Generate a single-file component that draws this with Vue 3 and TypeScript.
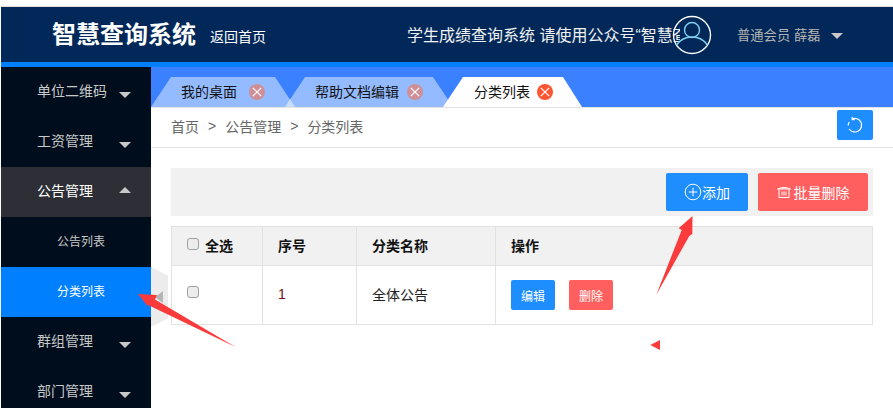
<script setup lang="ts">
interface MenuItem { label: string; state: 'closed' | 'open' | 'sub' | 'current' }
const menu: MenuItem[] = [
  { label: '单位二维码', state: 'closed' },
  { label: '工资管理', state: 'closed' },
  { label: '公告管理', state: 'open' },
  { label: '公告列表', state: 'sub' },
  { label: '分类列表', state: 'current' },
  { label: '群组管理', state: 'closed' },
  { label: '部门管理', state: 'closed' },
]
const tabs = [
  { label: '我的桌面', cls: 'tab-a' },
  { label: '帮助文档编辑', cls: 'tab-b' },
  { label: '分类列表', cls: 'tab-c' },
]
</script>

<template>
  <div class="page">
    <header class="header">
      <div class="title">智慧查询系统</div>
      <a class="home">返回首页</a>
      <div class="notice"><span>学生成绩查询系统 请使用公众号“智慧查询系统”</span></div>
      <svg class="avatar" width="40" height="40" viewBox="0 0 40 40">
        <circle cx="20" cy="20" r="18.5" fill="none" stroke="#fff" stroke-width="1.4" />
        <circle cx="20" cy="15" r="7.5" fill="none" stroke="#7fd0f2" stroke-width="1.4" />
        <path d="M4.5 30 C9 23.5 14 22 20 22 C26 22 31 23.5 35.5 30" fill="none" stroke="#7fd0f2" stroke-width="1.4" />
      </svg>
      <div class="user">普通会员 薛磊</div>
      <i class="tri down user-tri"></i>
    </header>
    <div class="accent"></div>
    <div class="body">
      <aside class="side">
        <div
          v-for="m in menu"
          :key="m.label"
          class="menu-item"
          :class="m.state"
        >
          <span class="menu-label">{{ m.label }}</span>
          <i v-if="m.state === 'closed'" class="tri down"></i>
          <i v-if="m.state === 'open'" class="tri up"></i>
        </div>
      </aside>
      <main class="main">
        <div class="tabbar">
          <div v-for="t in tabs" :key="t.label" class="tab" :class="t.cls">
            <span class="tab-label">{{ t.label }}</span>
            <svg class="close" width="16" height="16" viewBox="0 0 16 16">
              <circle cx="8" cy="8" r="8" class="close-bg" />
              <path d="M3.8 3.8 L12.2 12.2 M12.2 3.8 L3.8 12.2" stroke="#fff" stroke-width="1.2" />
            </svg>
          </div>
          <div class="notch"></div>
        </div>
        <div class="crumbbar">
          <div class="crumbs">
            <span>首页</span><em>&gt;</em><span>公告管理</span><em>&gt;</em><span>分类列表</span>
          </div>
          <button class="refresh" type="button" aria-label="刷新">
            <svg width="18" height="18" viewBox="0 0 18 18" fill="none" stroke="#fff" stroke-width="1.2">
              <path d="M6 3 A6.8 6.8 0 1 1 3.2 13" />
              <path d="M2.2 9.5 A7 7 0 0 1 3.2 6" />
              <path d="M6.2 1 L6.2 3.6 L8.8 3.6" />
            </svg>
          </button>
        </div>
        <div class="content">
          <div class="toolbar">
            <button class="btn blue add" type="button">
              <svg width="18" height="18" viewBox="0 0 18 18" fill="none" stroke="#fff" stroke-width="1">
                <circle cx="9" cy="9" r="7.8" />
                <path d="M9 4.8 V13.2 M4.8 9 H13.2" />
              </svg>
              <span>添加</span>
            </button>
            <button class="btn red del" type="button">
              <svg width="14" height="14" viewBox="0 0 14 14" fill="none" stroke="#fff" stroke-width="1">
                <path d="M0.5 4 C3 2.4 11 2.4 13.5 4 Z M2 4.5 V12.5 H12 V4.5 M5 6.5 V10.5 M7 6.5 V10.5 M9 6.5 V10.5 M4.5 2.5 H9.5" />
              </svg>
              <span>批量删除</span>
            </button>
          </div>
          <table class="grid">
            <colgroup>
              <col class="col-a" />
              <col class="col-b" />
              <col class="col-c" />
              <col />
            </colgroup>
            <thead>
              <tr>
                <th><span class="check head-check"></span>全选</th>
                <th>序号</th>
                <th>分类名称</th>
                <th>操作</th>
              </tr>
            </thead>
            <tbody>
              <tr>
                <td><span class="check"></span></td>
                <td class="num">1</td>
                <td>全体公告</td>
                <td>
                  <div class="row-actions">
                    <button class="mini blue" type="button">编辑</button>
                    <button class="mini red" type="button">删除</button>
                  </div>
                </td>
              </tr>
            </tbody>
          </table>
          <div class="handle"><i></i></div>
        </div>
      </main>
    </div>
    <svg class="marks" width="893" height="408" viewBox="0 0 893 408">
      <g fill="#fb3b3b">
        <path d="M138 294 L157 295 L155 299.5 L235.5 347 L147 304.5 L149 308 Z" />
        <path d="M692.5 216 L678.7 228.3 L681.7 230 L656.3 294.7 L689.3 236 L692.3 234 Z" />
        <path d="M650.3 345 L660 340 L660 350 Z" />
      </g>
    </svg>
  </div>
</template>

<style>
html, body { margin: 0; background: #fff; overflow: hidden; }
</style>

<style scoped>
.page {
  width: 893px;
  height: 408px;
  padding: 6px 0 0 1px;
  box-sizing: border-box;
  overflow: hidden;
  font-family: "Liberation Sans", "Noto Sans CJK SC", sans-serif;
  font-size: 14px;
  color: #333;
  display: flex;
  flex-direction: column;
  position: relative;
}
.header {
  height: 56px;
  box-sizing: border-box;
  border-top: 1px solid #dcdcdc;
  flex: none;
  background: #022859;
  color: #fff;
  display: flex;
  align-items: center;
  position: relative;
}
.title { margin-left: 51px; font-size: 24px; font-weight: 700; line-height: 32px; margin-top: 1px; }
.home { margin-left: 14px; font-size: 14px; margin-top: 2px; }
.notice {
  margin-left: 141px;
  width: 273px;
  overflow: hidden;
  white-space: nowrap;
  font-size: 16px;
  color: #f2f2f2;
  margin-top: -1px;
}
.avatar { margin-left: -8px; flex: none; position: relative; margin-top: 1px; }
.user { margin-left: 25px; font-size: 13.3px; color: #b4b4b4; white-space: nowrap; margin-top: -1px; }
.tri { display: block; width: 0; height: 0; border-left: 6px solid transparent; border-right: 6px solid transparent; }
.tri.down { border-top: 6px solid #c8c8c8; }
.tri.up { border-bottom: 6px solid #c8c8c8; }
.user-tri { margin-left: 11px; margin-top: 3px; }
.accent { height: 5px; flex: none; background: #0080ff; }
.body { flex: 1; display: flex; min-height: 0; }
.side { width: 150px; flex: none; background: #000d1c; overflow: hidden; }
.menu-item {
  height: 50px;
  flex: none;
  display: flex;
  align-items: center;
  color: #c8c8c8;
  padding-left: 36px;
  position: relative;
}
.menu-item .tri { position: absolute; left: 118px; top: 25px; }
.menu-item.open { background: #2d2e36; color: #fff; }
.menu-item.open .tri { top: 20px; }
.menu-label { display: block; margin-top: -5px; }
.menu-item.sub, .menu-item.current { padding-left: 56px; font-size: 12px; }
.menu-item.sub .menu-label, .menu-item.current .menu-label { margin-top: -3px; }
.menu-item.current { background: #0080ff; color: #fff; }
.main { flex: 1; min-width: 0; position: relative; }
.tabbar {
  height: 40px;
  background: #3a80ff;
  box-sizing: border-box;
  padding-top: 10px;
  display: flex;
  position: relative;
}
.tab {
  height: 30px;
  display: flex;
  align-items: center;
  flex: none;
  color: #111;
  box-sizing: border-box;
  clip-path: polygon(20px 0, calc(100% - 20px) 0, 100% 100%, 0 100%);
}
.tab svg { flex: none; }
.tab-label { margin-top: -2px; }
.tab-a { width: 144px; padding-left: 30px; background: #94bbff; }
.tab-a .close { margin-left: 12px; }
.tab-b { width: 168px; margin-left: -10px; padding-left: 30px; background: #94bbff; }
.tab-b .close { margin-left: 8px; }
.tab-c { width: 139px; margin-left: -10px; padding-left: 31px; background: #fff; clip-path: polygon(20px 0, calc(100% - 19px) 0, 100% 100%, 0 100%); }
.tab-c .close { margin-left: 7px; }
.close-bg { fill: #cf8f98; }
.tab-c .close-bg { fill: #fc5531; }
.notch {
  position: absolute;
  left: 134px;
  bottom: 0;
  width: 10px;
  height: 8px;
  background: #c9dcff;
  clip-path: polygon(50% 0, 100% 100%, 0 100%);
}
.crumbbar {
  height: 41px;
  box-sizing: border-box;
  border-top: 1px solid #e4e4e4;
  border-bottom: 1px solid #e4e4e4;
  display: flex;
  align-items: center;
  justify-content: space-between;
  padding: 0 20px;
}
.crumbs { font-size: 14px; color: #666; display: flex; align-items: center; margin-top: -3px; }
.crumbs em { font-style: normal; margin: 0 9px; }
.refresh {
  width: 36px;
  height: 30px;
  margin-top: -6px;
  border: 0;
  padding: 0;
  border-radius: 2px;
  background: #1e8eff;
  display: flex;
  align-items: center;
  justify-content: center;
}
.content { padding: 20px 20px 0; position: relative; }
.toolbar {
  height: 48px;
  background: #f1f1f1;
  display: flex;
  justify-content: flex-end;
  align-items: center;
  gap: 10px;
  padding-right: 5px;
  margin-bottom: 10px;
}
.btn {
  height: 38px;
  border: 0;
  border-radius: 2px;
  color: #fff;
  font: inherit;
  font-size: 14px;
  display: flex;
  align-items: center;
  justify-content: center;
  padding: 0;
}
.btn span { margin-top: -1px; }
.blue { background: #1e8eff; }
.red { background: #ff5f5f; }
.add { width: 82px; }
.del { width: 110px; gap: 3px; }
.grid {
  width: 702px;
  table-layout: fixed;
  border-collapse: collapse;
  font-size: 14px;
  color: #222;
}
.col-a { width: 91px; }
.col-b { width: 94px; }
.col-c { width: 139px; }
.grid th, .grid td {
  border: 1px solid #e2e2e2;
  text-align: left;
  padding: 0 15px 2px;
}
.grid th { height: 36px; background: #f1f1f1; font-weight: 700; color: #111; }
.grid td { height: 56px; color: #222; }
.grid .num { color: #6b1111; }
.check {
  display: inline-block;
  width: 10px;
  height: 10px;
  border: 1px solid #a0a0a0;
  border-radius: 3px;
  background: #ececec;
  vertical-align: 1px;
}
.head-check { margin-right: 6px; }
.row-actions { display: flex; gap: 14px; margin-top: 2px; }
.mini {
  width: 44px;
  height: 30px;
  border: 0;
  padding: 0;
  border-radius: 2px;
  color: #fff;
  font: inherit;
  font-size: 12px;
}
.handle {
  position: absolute;
  left: 0;
  top: 119px;
  width: 17px;
  height: 60px;
  background: #ececec;
  clip-path: polygon(0 0, 100% 14%, 100% 86%, 0 100%);
  display: flex;
  align-items: center;
}
.handle i {
  display: block;
  margin-left: 4px;
  width: 0;
  height: 0;
  border-top: 6px solid transparent;
  border-bottom: 6px solid transparent;
  border-right: 8px solid #b4b4b4;
}
.marks { position: absolute; left: 0; top: 0; pointer-events: none; }
</style>
